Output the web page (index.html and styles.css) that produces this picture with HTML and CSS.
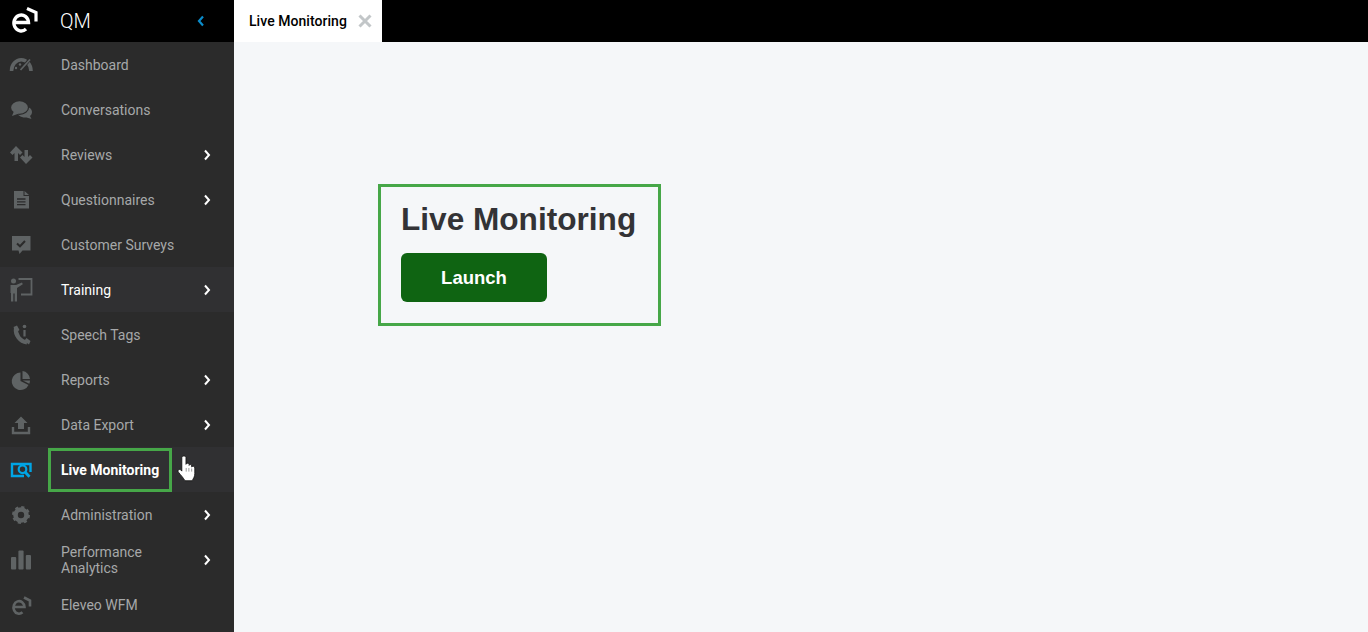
FILE: index.html
```html
<!DOCTYPE html>
<html>
<head>
    <title>QM - Live Monitoring</title>
    <meta charset="UTF-8">
    <meta name="viewport" content="width=device-width, initial-scale=1.0">
    <link rel="stylesheet" href="styles.css">
</head>
<body>
    <div class="app">
        <aside class="sidebar">
            <div class="brand">
                <svg class="brand-logo" width="26" height="26" viewBox="0 0 26 26">
                    <path d="M2 15.500 H16.500 A7.300 8 0 1 0 14 22" fill="none" stroke="#fff" stroke-width="3.400"/>
                    <path d="M15 1.500 L24 5.500 V14.500" fill="none" stroke="#fff" stroke-width="3.200"/>
                </svg>
                <span class="brand-name">QM</span>
                <svg class="collapse" width="8" height="12" viewBox="0 0 8 12">
                    <path d="M6 1.500 L2 6 L6 10.500" fill="none" stroke="#0a8ccb" stroke-width="2.200"/>
                </svg>
            </div>
            <nav class="nav">
                <a class="nav-item">
                    <svg class="nav-icon" width="24" height="24" viewBox="0 0 24 24">
                        <path d="M2.500 18 A9.700 11.200 0 0 1 22 18" fill="none" stroke="#5f6364" stroke-width="3.600"/>
                        <path d="M11 18 L21 6" stroke="#2b2b2b" stroke-width="3.400"/>
                        <path d="M11.500 17 L21 6.500" stroke="#5f6364" stroke-width="1.800"/>
                        <circle cx="7" cy="15" r="1.200" fill="#5f6364"/>
                        <circle cx="11" cy="11.500" r="1.200" fill="#5f6364"/>
                    </svg>
                    <span class="nav-label">Dashboard</span>
                </a>
                <a class="nav-item">
                    <svg class="nav-icon" width="24" height="24" viewBox="0 0 24 24">
                        <path d="M14 8 C19 8 23 10.500 23 14 C23 16 22 17 21 18 L22.500 21 L17.500 19.500 C12 20 8 17 8 14 Z" fill="#5f6364"/>
                        <ellipse cx="10.500" cy="9.500" rx="9" ry="6.800" fill="#5f6364" stroke="#2b2b2b" stroke-width="1.200"/>
                        <path d="M5 13 L3 18 L10 15.500 Z" fill="#5f6364"/>
                    </svg>
                    <span class="nav-label">Conversations</span>
                </a>
                <a class="nav-item has-sub">
                    <svg class="nav-icon" width="24" height="24" viewBox="0 0 24 24">
                        <path d="M7 3 L13.500 9.500 L11 12 L9 10 V18 H5.500 V10 L3.500 12 L1 9.500 Z" fill="#5f6364"/>
                        <path d="M17 21 L23.500 14.500 L21 12 L19 14 V7 H15.500 V14 L13.500 12 L11 14.500 Z" fill="#5f6364"/>
                    </svg>
                    <span class="nav-label">Reviews</span>
                    <svg class="chevron" width="8" height="12" viewBox="0 0 8 12"><path d="M2 1.500 L6 6 L2 10.500"/></svg>
                </a>
                <a class="nav-item has-sub">
                    <svg class="nav-icon" width="24" height="24" viewBox="0 0 24 24">
                        <path d="M5 3 H14.500 V8 H20 V20.500 H5 Z" fill="#5f6364"/>
                        <path d="M15.500 3 L20 7 H15.500 Z" fill="#5f6364"/>
                        <path d="M8 11 H16.500 M8 13.800 H16.500 M8 16.600 H16.500" stroke="#2b2b2b" stroke-width="1.300"/>
                    </svg>
                    <span class="nav-label">Questionnaires</span>
                    <svg class="chevron" width="8" height="12" viewBox="0 0 8 12"><path d="M2 1.500 L6 6 L2 10.500"/></svg>
                </a>
                <a class="nav-item">
                    <svg class="nav-icon" width="24" height="24" viewBox="0 0 24 24">
                        <path d="M3 3 H21.500 V17.500 H13.500 L10.500 21 L9.500 17.500 H3 Z" fill="#5f6364"/>
                        <path d="M8 10.500 L11 13.300 L16 8" fill="none" stroke="#2b2b2b" stroke-width="2"/>
                    </svg>
                    <span class="nav-label">Customer Surveys</span>
                </a>
                <a class="nav-item is-open has-sub">
                    <svg class="nav-icon" width="24" height="24" viewBox="0 0 24 24">
                        <path d="M9.500 1 H22.500 V16.500 H12" fill="none" stroke="#5f6364" stroke-width="1.800"/>
                        <circle cx="4.500" cy="3" r="2.500" fill="#5f6364"/>
                        <path d="M1.500 7 H7 L13 4.500 L13.800 6.300 L8 10 V23.500 H5.700 V15.500 H4.300 V23.500 H2 V15 H1.500 Z" fill="#5f6364"/>
                    </svg>
                    <span class="nav-label">Training</span>
                    <svg class="chevron" width="8" height="12" viewBox="0 0 8 12"><path d="M2 1.500 L6 6 L2 10.500"/></svg>
                </a>
                <a class="nav-item">
                    <svg class="nav-icon" width="24" height="24" viewBox="0 0 24 24">
                        <path d="M7 5 C6 12 11 18.500 18 19.500" fill="none" stroke="#5f6364" stroke-width="4.200"/>
                        <path d="M4.500 4 L8 2.500 L10.500 7 L7 9.500 Z M15 18 L17.500 15 L21.500 18 L20 21.500 Z" fill="#5f6364"/>
                        <circle cx="15.500" cy="3.500" r="1.800" fill="#5f6364"/>
                        <path d="M15.500 7 V13.500" stroke="#5f6364" stroke-width="2.200"/>
                    </svg>
                    <span class="nav-label">Speech Tags</span>
                </a>
                <a class="nav-item has-sub">
                    <svg class="nav-icon" width="24" height="24" viewBox="0 0 24 24">
                        <path d="M11.500 4.500 V13 L19.500 17 A8.800 8.800 0 1 1 11.500 4.500 Z" fill="#5f6364"/>
                        <path d="M13.500 3 A8.500 8.500 0 0 1 21 11 H13.500 Z M13.800 12.500 H21 A8.500 8.500 0 0 1 20.300 15.800 Z" fill="#5f6364"/>
                    </svg>
                    <span class="nav-label">Reports</span>
                    <svg class="chevron" width="8" height="12" viewBox="0 0 8 12"><path d="M2 1.500 L6 6 L2 10.500"/></svg>
                </a>
                <a class="nav-item has-sub">
                    <svg class="nav-icon" width="24" height="24" viewBox="0 0 24 24">
                        <path d="M4 14 V20 H20 V14" fill="none" stroke="#5f6364" stroke-width="2.400"/>
                        <path d="M12 3.500 L18.500 10 H15 V16 H9 V10 H5.500 Z" fill="#5f6364"/>
                    </svg>
                    <span class="nav-label">Data Export</span>
                    <svg class="chevron" width="8" height="12" viewBox="0 0 8 12"><path d="M2 1.500 L6 6 L2 10.500"/></svg>
                </a>
                <a class="nav-item is-current">
                    <svg class="nav-icon" width="24" height="24" viewBox="0 0 24 24">
                        <path d="M21.500 14 V6 H3 V18 H15" fill="none" stroke="#00a5e5" stroke-width="2.400"/>
                        <circle cx="13.500" cy="11.300" r="3.800" fill="none" stroke="#00a5e5" stroke-width="2.200"/>
                        <path d="M16 14 L20.500 18.800" stroke="#00a5e5" stroke-width="2.800"/>
                    </svg>
                    <span class="nav-label">Live Monitoring</span>
                    <svg class="pointer" width="19" height="27" viewBox="0 0 18 26">
                        <path d="M4.500 2.500 C4.500 0.500 8.500 0.500 8.500 2.500 V9 C9 7.500 11.500 7.500 11.500 9 V10 C12 8.800 14 9 14 10.500 V11.500 C14.800 10.500 17 10.800 17 12.500 V18 C17 21 15.500 22.500 14.500 24.800 H7.500 C6 22 4 20 1.200 16.500 C0 14.800 2 13 3.500 14.300 L4.500 15.500 Z" fill="#fff" stroke="#111" stroke-width="0.800"/>
                        <path d="M8.700 12.500 V16 M11.300 12.500 V16 M14 13 V16" stroke="#777" stroke-width="0.700"/>
                    </svg>
                </a>
                <a class="nav-item has-sub">
                    <svg class="nav-icon" width="24" height="24" viewBox="0 0 24 24">
                        <circle cx="12" cy="12" r="5.500" fill="none" stroke="#5f6364" stroke-width="4.600"/>
                        <circle class="gear-teeth" cx="12" cy="12" r="7.500" fill="none" stroke="#5f6364" stroke-width="3"/>
                    </svg>
                    <span class="nav-label">Administration</span>
                    <svg class="chevron" width="8" height="12" viewBox="0 0 8 12"><path d="M2 1.500 L6 6 L2 10.500"/></svg>
                </a>
                <a class="nav-item has-sub">
                    <svg class="nav-icon" width="24" height="24" viewBox="0 0 24 24">
                        <rect x="2" y="9" width="5.200" height="12.500" rx="1" fill="#5f6364"/>
                        <rect x="9.400" y="2.500" width="5.200" height="19" rx="1" fill="#5f6364"/>
                        <rect x="16.800" y="7" width="5.200" height="14.500" rx="1" fill="#5f6364"/>
                    </svg>
                    <span class="nav-label">Performance Analytics</span>
                    <svg class="chevron" width="8" height="12" viewBox="0 0 8 12"><path d="M2 1.500 L6 6 L2 10.500"/></svg>
                </a>
                <a class="nav-item">
                    <svg class="nav-icon" width="24" height="24" viewBox="0 0 24 24">
                        <path d="M5.500 14 H15.500 A5.500 6.300 0 1 0 13.500 19.300" fill="none" stroke="#5f6364" stroke-width="2.600"/>
                        <path d="M15 4.500 L21 7.500 V13.500" fill="none" stroke="#5f6364" stroke-width="2.600"/>
                    </svg>
                    <span class="nav-label">Eleveo WFM</span>
                </a>
            </nav>
        </aside>
        <div class="workspace">
            <div class="tabbar">
                <div class="tab">
                    <span class="tab-title">Live Monitoring</span>
                    <svg class="tab-close" width="14" height="14" viewBox="0 0 14 14">
                        <path d="M1.500 1.500 L12.500 12.500 M12.500 1.500 L1.500 12.500" stroke="#c2c6c8" stroke-width="3"/>
                    </svg>
                </div>
            </div>
            <main class="content">
                <section class="launch-card">
                    <h1>Live Monitoring</h1>
                    <button type="button" class="launch-btn">Launch</button>
                </section>
            </main>
        </div>
    </div>
</body>
</html>
```

FILE: styles.css
```css
html, body {
    margin: 0;
    height: 100%;
    overflow: hidden;
}
body {
    font-family: Roboto, Arial, sans-serif;
    background: #f5f7f9;
}
.app {
    display: flex;
    height: 632px;
}
.sidebar {
    width: 234px;
    flex-shrink: 0;
    background: #2b2b2b;
}
.brand {
    display: flex;
    align-items: center;
    height: 42px;
    background: #000;
    color: #fff;
}
.brand-logo {
    margin-left: 12px;
    margin-top: -2px;
}
.brand-name {
    margin-left: 22px;
    font-size: 20px;
    font-weight: 300;
}
.collapse {
    margin-left: auto;
    margin-right: 29px;
}
.nav-item {
    position: relative;
    display: flex;
    align-items: center;
    height: 45px;
    padding: 0 24px 0 9px;
    font-size: 14px;
    color: #a6a8a9;
}
.nav-icon {
    flex-shrink: 0;
}
.nav-label {
    margin-left: 28px;
    max-width: 125px;
    line-height: 16px;
}
.chevron {
    margin-left: auto;
    margin-right: -1px;
}
.chevron path {
    fill: none;
    stroke: #fff;
    stroke-width: 2;
}
.is-open {
    background: #303032;
    color: #fff;
}
.is-current {
    background: #303032;
    color: #fff;
    font-weight: 700;
}
.is-current .nav-label {
    margin-left: 15px;
    max-width: none;
    padding: 0 10px;
    height: 44px;
    box-sizing: border-box;
    border: 3px solid #46a748;
    line-height: 38px;
}
.pointer {
    position: absolute;
    left: 177px;
    top: 8px;
}
.gear-teeth {
    stroke-dasharray: 3 2.89;
}
.workspace {
    flex: 1;
    display: flex;
    flex-direction: column;
}
.tabbar {
    display: flex;
    height: 42px;
    background: #000;
}
.tab {
    display: flex;
    align-items: center;
    width: 148px;
    box-sizing: border-box;
    padding-left: 15px;
    background: #fff;
    color: #000;
    font-size: 14px;
    font-weight: 500;
    letter-spacing: 0.05px;
}
.tab-close {
    margin-left: 11px;
}
.content {
    flex: 1;
    padding: 142px 0 0 144px;
}
.launch-card {
    width: 283px;
    height: 142px;
    box-sizing: border-box;
    padding: 0 20px;
    border: 3px solid #46a748;
}
.launch-card h1 {
    margin: 14px 0 15px;
    font-family: "Liberation Sans", Arial, sans-serif;
    font-size: 31.6px;
    line-height: 37px;
    font-weight: 700;
    color: #333336;
    white-space: nowrap;
}
.launch-btn {
    display: block;
    width: 146px;
    height: 49px;
    padding: 0;
    border: none;
    border-radius: 6px;
    background: #0f6412;
    color: #fff;
    font-family: "Liberation Sans", Arial, sans-serif;
    font-size: 18.5px;
    font-weight: 700;
}
```
